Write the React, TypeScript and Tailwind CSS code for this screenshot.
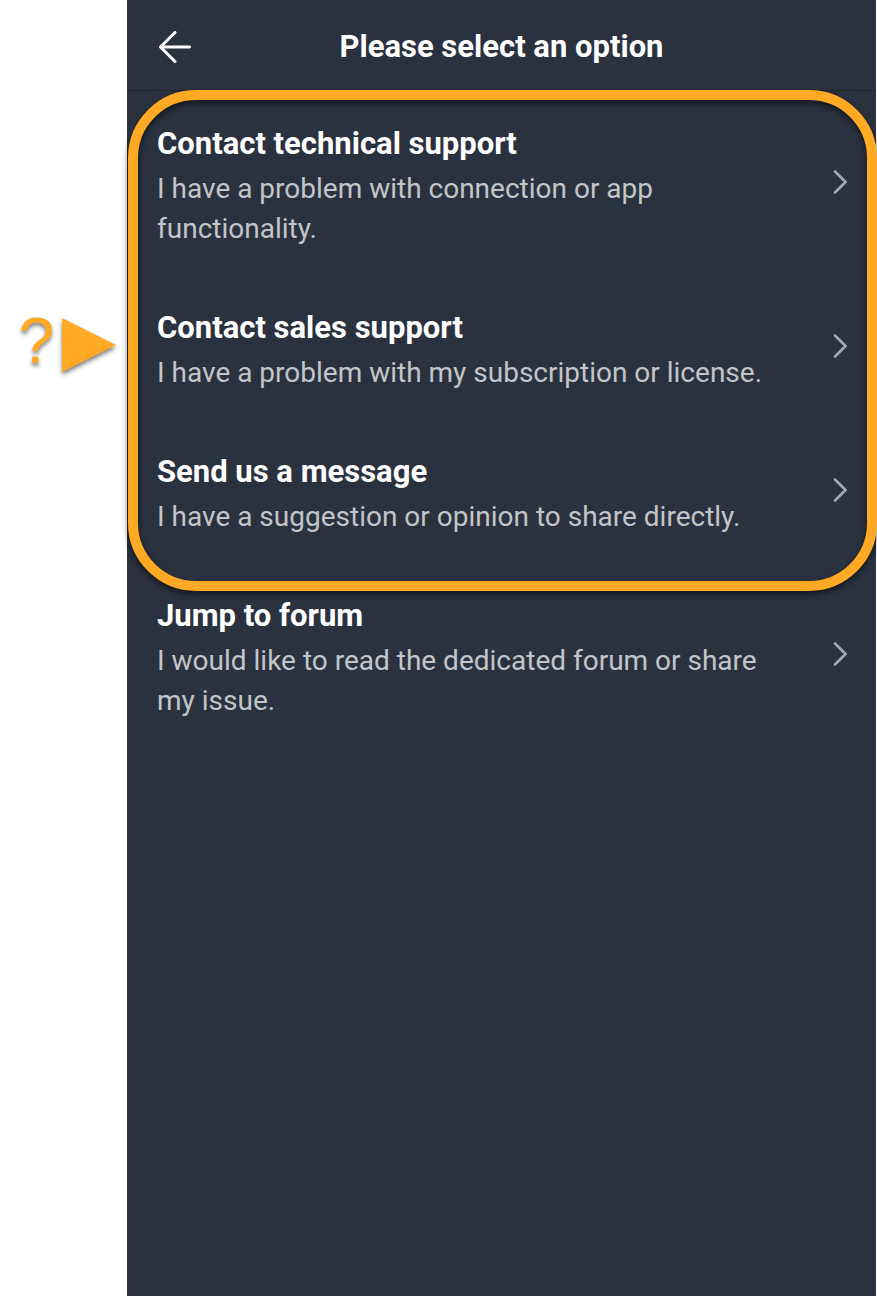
type Option = {
  id: string
  title: string
  description: string
}

const contactOptions: Option[] = [
  {
    id: 'technical',
    title: 'Contact technical support',
    description: 'I have a problem with connection or app functionality.',
  },
  {
    id: 'sales',
    title: 'Contact sales support',
    description: 'I have a problem with my subscription or license.',
  },
  {
    id: 'message',
    title: 'Send us a message',
    description: 'I have a suggestion or opinion to share directly.',
  },
]

const forumOption: Option = {
  id: 'forum',
  title: 'Jump to forum',
  description: 'I would like to read the dedicated forum or share my issue.',
}

function OptionRow({ option }: { option: Option }) {
  return (
    <button type="button" className="flex w-full items-center justify-between gap-8 pl-[30px] pr-7 text-left">
      <span className="max-w-[620px] pb-[25px] pt-[29px]">
        <span className="block text-[31px] font-bold leading-[50px] text-white">{option.title}</span>
        <span className="block text-[28px] leading-10 text-[#c3c5c8]">{option.description}</span>
      </span>
      <svg className="h-6 w-4 shrink-0 text-[#a3a6ac]" viewBox="0 0 16 24" fill="none" stroke="currentColor">
        <path d="M3 1.5L13.5 12L3 22.5" strokeWidth={2.8} strokeLinecap="round" strokeLinejoin="round" />
      </svg>
    </button>
  )
}

export default function App() {
  return (
    <div className="flex min-h-screen bg-white font-[Roboto,sans-serif]">
      {/* Callout pointing at the highlighted options */}
      <aside className="flex w-[127px] shrink-0 items-start justify-end gap-2 pr-[11px] pt-[305px] text-[#ffa924]">
        <span className="font-['Liberation_Sans',sans-serif] text-[64px] leading-[72px] [text-shadow:0_3px_4px_rgb(0_0_0/0.5)]">
          ?
        </span>
        <svg className="mt-3 h-15 w-[54px] shrink-0 overflow-visible drop-shadow-[0_3px_2px_rgb(0_0_0/0.5)]" viewBox="0 0 54 60" fill="currentColor">
          <path d="M0 1L54 28L0 55Z" />
        </svg>
      </aside>

      <main className="mr-px min-w-0 flex-1 bg-[#2b323f]">
        {/* Header */}
        <header className="grid h-[91px] grid-cols-[64px_1fr_64px] items-center border-b border-[#1f232c] pt-1">
          <button type="button" aria-label="Back" className="flex justify-end text-white">
            <svg className="h-8 w-8" viewBox="0 0 32 32" fill="none" stroke="currentColor">
              <path d="M16 1.5L1.5 16L16 30.5M1.5 16H30.5" strokeWidth={3} strokeLinecap="round" strokeLinejoin="round" />
            </svg>
          </button>
          <h1 className="text-center text-[31px] font-bold leading-[50px] text-white">Please select an option</h1>
        </header>

        <div className="-mt-px">
          <section className="relative">
            {contactOptions.map((option) => (
              <OptionRow key={option.id} option={option} />
            ))}
            {/* Highlight frame */}
            <div className="pointer-events-none absolute -bottom-[29px] -right-px left-px top-0 z-10 rounded-[68px] border-[10px] border-[#ffa924] drop-shadow-[0_3px_3px_rgb(0_0_0/0.6)]" />
          </section>
          <OptionRow option={forumOption} />
        </div>
      </main>
    </div>
  )
}
